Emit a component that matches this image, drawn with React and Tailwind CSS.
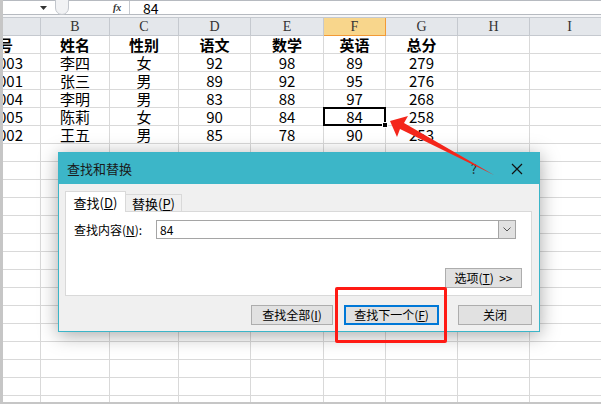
import React from "react";

const cols = [
  { w: "w-[38px]" },
  { w: "w-[69px]" },
  { w: "w-[69px]" },
  { w: "w-[72px]" },
  { w: "w-[73px]" },
  { w: "w-[62px]" },
  { w: "w-[72px]" },
  { w: "w-[72px]" },
  { w: "w-[80px]" },
];

const letters = ["", "B", "C", "D", "E", "F", "G", "H", "I"];

const rows = [
  ["学号", "姓名", "性别", "语文", "数学", "英语", "总分", "", ""],
  ["10003", "李四", "女", "92", "98", "89", "279", "", ""],
  ["10001", "张三", "男", "89", "92", "95", "276", "", ""],
  ["10004", "李明", "男", "83", "88", "97", "268", "", ""],
  ["10005", "陈莉", "女", "90", "84", "84", "258", "", ""],
  ["10002", "王五", "男", "85", "78", "90", "253", "", ""],
];

const cjk = { fontFamily: '"Noto Sans CJK SC", "Noto Sans", sans-serif' };
const serif = { fontFamily: '"Liberation Serif", serif' };

function ColHead({ w, label, active }) {
  const tone = active
    ? "bg-[#f8d68c] border-[#f29a36]"
    : "bg-[#e4e7eb] border-[#c5c9cf]";
  return (
    <div
      className={w + " shrink-0 h-[18px] flex items-center justify-center border-r border-b text-[14px] leading-none text-[#333] " + tone}
      style={serif}
    >
      {label}
    </div>
  );
}

function HeaderRow() {
  return (
    <div className="flex h-[19px] shrink-0 border-t border-[#c5c9cf] bg-[#e4e7eb]">
      {cols.map((c, i) => (
        <ColHead key={i} w={c.w} label={letters[i]} active={i === 5} />
      ))}
    </div>
  );
}

function Row({ data, r }) {
  return (
    <div className="flex h-[18px] shrink-0">
      {cols.map((c, i) => {
        const v = data ? data[i] : "";
        const selected = r === 4 && i === 5;
        return (
          <div
            key={i}
            className={`${c.w} relative shrink-0 h-full border-r border-b border-[#d9d9d9] ${selected ? "z-10" : ""}`}
          >
            <div
              className={`w-full h-full flex items-center overflow-hidden whitespace-nowrap text-[15px] leading-none text-black ${
                i === 0 ? (r === 0 ? "justify-end pr-[27px]" : "justify-end pr-[17px]") : "justify-center"
              } ${r === 0 ? "font-bold" : ""}`}
              style={cjk}
            >
              {v}
            </div>
            {selected && (
              <>
                <div className="absolute left-[-1px] top-[-1px] w-[63px] h-[19px] border-2 border-black" />
                <div className="absolute right-[-3px] bottom-[-3px] w-[6px] h-[6px] bg-black border border-white" />
              </>
            )}
          </div>
        );
      })}
    </div>
  );
}

function Btn({ children, className = "", primary }) {
  return (
    <div
      className={`flex items-center justify-center h-[20px] bg-[#e1e1e1] text-[12px] leading-none text-black ${
        primary ? "border-2 border-[#0078d7]" : "border border-[#adadad]"
      } ${className}`}
      style={cjk}
    >
      {children}
    </div>
  );
}

function FindDialog() {
  return (
    <div
      className="absolute left-[58px] top-[152px] w-[482px] h-[180px] border border-[#3bb5c8] bg-[#f0f0f0] flex flex-col shadow-[0_3px_18px_rgba(0,0,0,0.35)]"
      style={cjk}
    >
      <div className="h-[31px] shrink-0 bg-[#3cb6c8] flex items-center pl-[8px] pr-[16px] text-[13px] text-[#1a1a1a]">
        <span>查找和替换</span>
        <span className="ml-auto mr-[34px] text-[13px] text-[#222]">?</span>
        <svg width="12" height="12" viewBox="0 0 12 12">
          <path d="M1 1L11 11M11 1L1 11" stroke="#111" strokeWidth="1.2" />
        </svg>
      </div>
      <div className="flex-1 px-[6px] pt-[6px] flex flex-col">
        <div className="flex items-end h-[21px] text-[13px] leading-none">
          <div className="w-[61px] h-[21px] bg-white border border-b-0 border-[#d9d9d9] flex items-center justify-center relative z-10 top-[1px]">
            查找(<span className="underline">D</span>)
          </div>
          <div className="w-[56px] h-[17px] bg-[#f0f0f0] border border-l-0 border-b-0 border-[#d9d9d9] flex items-center justify-center">
            替换(<span className="underline">P</span>)
          </div>
        </div>
        <div className="w-[467px] h-[85px] bg-white border border-[#d9d9d9] flex flex-col px-[8px] pt-[8px]">
          <div className="flex items-center h-[19px] text-[12px] leading-none">
            <span className="w-[82px]">
              查找内容(<span className="underline">N</span>):
            </span>
            <div className="flex-1 h-[19px] border border-[#a5a5a5] flex items-center pl-[3px] mr-[7px]">
              <span className="flex-1">84</span>
              <div className="w-[17px] h-[17px] bg-[#e1e1e1] border-l border-[#a5a5a5] flex items-center justify-center">
                <svg width="8" height="5" viewBox="0 0 8 5">
                  <path d="M0.5 0.5L4 4L7.5 0.5" fill="none" stroke="#555" strokeWidth="1" />
                </svg>
              </div>
            </div>
          </div>
          <div className="flex justify-end mt-[29px] mr-[1px]">
            <Btn className="w-[77px]">
              选项(<span className="underline">T</span>)&nbsp;&nbsp;&gt;&gt;
            </Btn>
          </div>
        </div>
        <div className="flex items-center mt-[9px] pl-[186px]">
          <Btn className="w-[82px]">
            查找全部(<span className="underline">I</span>)
          </Btn>
          <Btn primary className="w-[95px] ml-[11px]">
            查找下一个(<span className="underline">F</span>)
          </Btn>
          <Btn className="w-[74px] ml-[19px]">关闭</Btn>
        </div>
      </div>
    </div>
  );
}

export default function App() {
  const empty = Array.from({ length: 16 });
  return (
    <div className="relative w-[601px] h-[404px] overflow-hidden bg-white flex">
      <div className="w-[3px] shrink-0 h-full bg-[#c6c6c6]" />
      <div className="flex-1 flex flex-col min-w-0">
        <div className="h-[15px] shrink-0 flex items-center border-t border-b border-[#b6bac0] relative">
          <div className="w-[52px] h-full flex items-center justify-end pr-[8px]">
            <svg width="7" height="4" viewBox="0 0 7 4">
              <path d="M0 0H7L3.5 4Z" fill="#333" />
            </svg>
          </div>
          <div className="w-[14px] h-[22px] -mt-[8px] rounded-full border border-[#c2c6cc] bg-[#f1f2f4]" />
          <div className="w-[44px]" />
          <span className="w-[14px] text-[10px] italic font-bold text-[#333] leading-none" style={serif}>
            fx
          </span>
          <div className="w-px h-full bg-[#c6cad0] ml-[2px]" />
          <span className="ml-[13px] text-[14px] leading-none" style={cjk}>
            84
          </span>
        </div>
        <div className="h-[2px] shrink-0 bg-[#f5f6f8]" />
        <div className="flex-1 flex flex-col overflow-hidden min-h-0">
          <HeaderRow />
          {rows.map((d, r) => (
            <Row key={r} data={d} r={r} />
          ))}
          {empty.map((_, r) => (
            <Row key={"e" + r} r={100} />
          ))}
        </div>
        <div className="h-[2px] shrink-0 bg-[#c6c6c6]" />
      </div>

      <FindDialog />

      <div className="absolute left-[335px] top-[287px] w-[112px] h-[56px] border-[3px] border-[#ff1a14] rounded-[2px]" />

      <svg className="absolute left-0 top-0 pointer-events-none" width="601" height="404" viewBox="0 0 601 404">
        <polygon points="390,121 408,116 404,123 494,175 400,129 397,137" fill="#f4261b" />
      </svg>
    </div>
  );
}
